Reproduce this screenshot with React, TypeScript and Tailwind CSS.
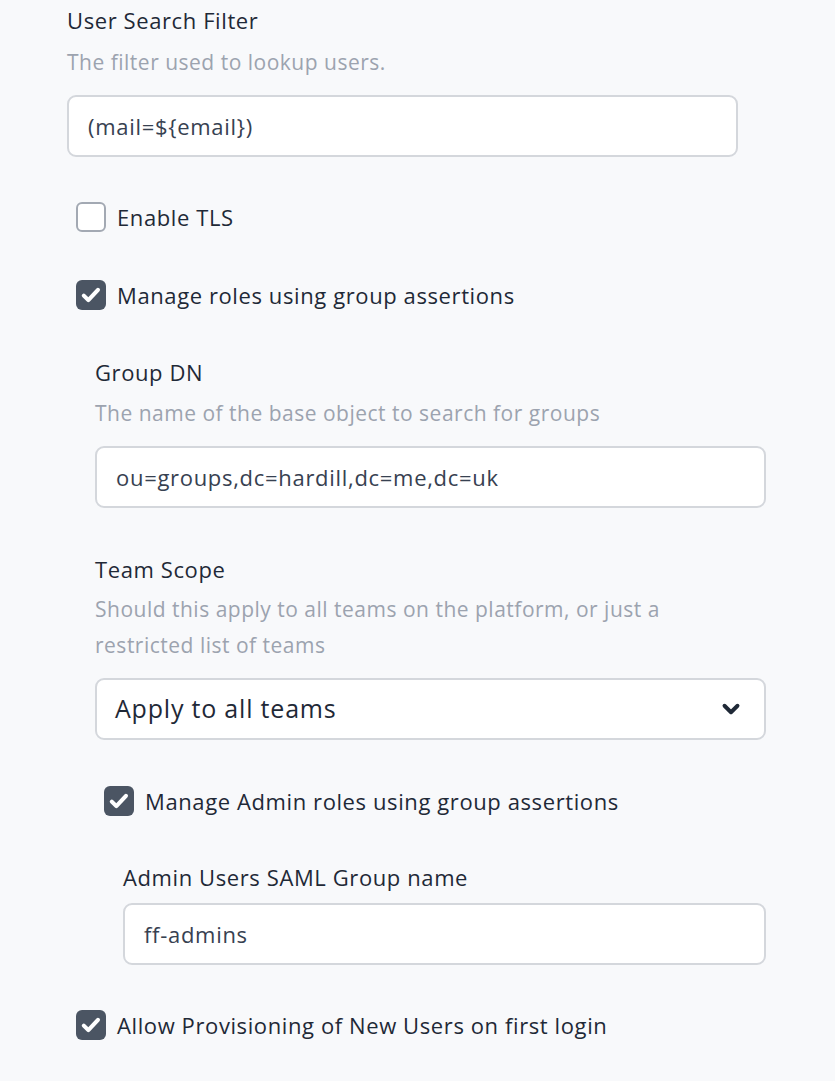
import { ChevronDown } from "lucide-react";

function Check({ checked }: { checked: boolean }) {
  return checked ? (
    <span className="flex h-[30px] w-[30px] shrink-0 items-center justify-center rounded-[6px] bg-[#4b5563]">
      <svg viewBox="0 0 20 20" className="h-[24px] w-[24px]" fill="none">
        <path d="M4 10.5l3.8 3.8 8-8.6" stroke="white" strokeWidth="3.4" strokeLinecap="round" strokeLinejoin="round" />
      </svg>
    </span>
  ) : (
    <span className="h-[30px] w-[30px] shrink-0 rounded-[6px] border-2 border-[#a3a9b3] bg-white" />
  );
}

function CheckRow({ checked, label, className = "" }: { checked: boolean; label: string; className?: string }) {
  return (
    <div className={`flex items-center gap-[11px] ${className}`}>
      <Check checked={checked} />
      <span className="text-[22px] leading-[30px] tracking-[0.6px] text-[#1f2937]">{label}</span>
    </div>
  );
}

function TextInput({ value, className = "" }: { value: string; className?: string }) {
  return (
    <div
      className={`flex h-[62px] items-center rounded-[9px] border-2 border-[#d4d7dc] bg-white px-[19px] text-[22px] tracking-[0.7px] text-[#374151] ${className}`}
    >
      {value}
    </div>
  );
}

export default function App() {
  return (
    <div className="min-h-screen bg-[#f8f9fb] font-['Open_Sans',sans-serif]">
      <div className="pl-[67px] pr-[69px] pt-[5px]">
        {/* User search filter */}
        <div className="pr-[28px]">
          <p className="text-[22px] leading-[30px] tracking-[0.6px] text-[#1f2937]">User Search Filter</p>
          <p className="mt-[12px] text-[21px] leading-[30px] tracking-[0.5px] text-[#9ca3af]">
            The filter used to lookup users.
          </p>
          <TextInput value="(mail=${email})" className="mt-[18px]" />
        </div>

        <CheckRow checked={false} label="Enable TLS" className="mt-[45px] pl-[9px]" />
        <CheckRow checked label="Manage roles using group assertions" className="mt-[48px] pl-[9px]" />

        {/* Group assertions */}
        <div className="pl-[28px]">
          <p className="mt-[47px] text-[22px] leading-[30px] tracking-[0.6px] text-[#1f2937]">Group DN</p>
          <p className="mt-[11px] text-[21px] leading-[30px] tracking-[0.5px] text-[#9ca3af]">
            The name of the base object to search for groups
          </p>
          <TextInput value="ou=groups,dc=hardill,dc=me,dc=uk" className="mt-[18px]" />

          <p className="mt-[46px] text-[22px] leading-[30px] tracking-[0.6px] text-[#1f2937]">Team Scope</p>
          <p className="mt-[7px] max-w-[590px] text-[21px] leading-[36px] tracking-[0.5px] text-[#9ca3af]">
            Should this apply to all teams on the platform, or just a restricted list of teams
          </p>
          <div className="mt-[15px] flex h-[62px] items-center justify-between rounded-[9px] border-2 border-[#d4d7dc] bg-white pl-[18px] pr-[20px]">
            <span className="text-[25px] tracking-[0.8px] text-[#1f2937]">Apply to all teams</span>
            <ChevronDown className="h-[26px] w-[26px] text-[#1f2937]" strokeWidth={3.6} />
          </div>

          <CheckRow checked label="Manage Admin roles using group assertions" className="mt-[46px] pl-[9px]" />

          <div className="pl-[28px]">
            <p className="mt-[46px] text-[22px] leading-[30px] tracking-[0.6px] text-[#1f2937]">
              Admin Users SAML Group name
            </p>
            <TextInput value="ff-admins" className="mt-[11px]" />
          </div>
        </div>

        <CheckRow checked label="Allow Provisioning of New Users on first login" className="mt-[45px] pl-[9px]" />
      </div>
    </div>
  );
}
